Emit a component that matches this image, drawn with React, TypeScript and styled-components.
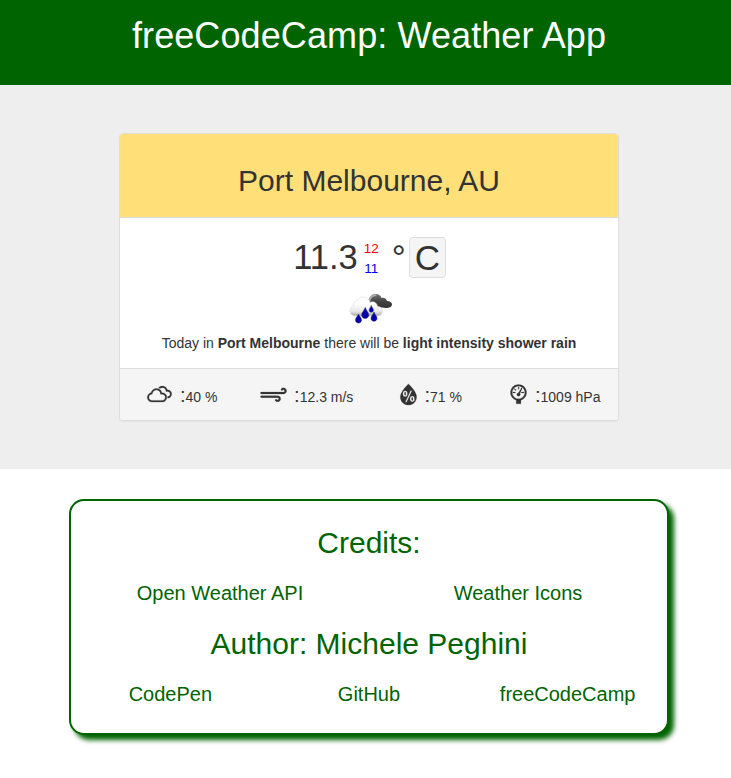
import React from "react";
import styled, { createGlobalStyle } from "styled-components";
import { WiCloudy, WiStrongWind, WiHumidity, WiBarometer } from "react-icons/wi";

const GlobalStyle = createGlobalStyle`
  *, *::before, *::after { box-sizing: border-box; }
  html { overflow: hidden; }
  body {
    margin: 0;
    background: #fff;
    color: #333;
    font: 14px/20px "Liberation Sans", Arial, Helvetica, sans-serif;
  }
`;

const Page = styled.div`
  width: 738px;
  min-height: 778px;
  text-align: center;
`;

const Header = styled.header`
  height: 85px;
  padding-top: 16px;
  background: #006400;
`;

const Title = styled.h1`
  margin: 0;
  font-size: 36px;
  font-weight: 400;
  letter-spacing: 0.1px;
  line-height: 40px;
  color: #fff;
`;

const Main = styled.main`
  display: flex;
  flex-direction: column;
  align-items: center;
  height: 384px;
  padding-top: 48px;
  background: #eee;
`;

const Card = styled.section`
  width: 500px;
  height: 288px;
  display: flex;
  flex-direction: column;
  overflow: hidden;
  background: #fff;
  border: 1px solid #ddd;
  border-radius: 4px;
  box-shadow: 0 1px 1px rgba(0, 0, 0, 0.05);
`;

const CardHeading = styled.div`
  height: 84px;
  padding-top: 30px;
  background: #fedf78;
  border-bottom: 1px solid #ddd;
`;

const City = styled.h2`
  margin: 0;
  font-size: 30px;
  font-weight: 400;
  line-height: 33px;
`;

const CardBody = styled.div`
  flex: 1;
  display: flex;
  flex-direction: column;
  align-items: center;
`;

const Temperature = styled.div`
  display: flex;
  align-items: center;
  margin-top: 19px;
  height: 41px;
  font-size: 35px;
  line-height: 41px;
`;

const Degrees = styled.span`
  margin-left: 1px;
  font-size: 34.5px;
`;

const Range = styled.div`
  display: flex;
  flex-direction: column;
  margin: 2px 13px 0 6px;
  font-size: 13.5px;
  line-height: 20px;
`;

const Bound = styled.span<{ $color: string }>`
  color: ${(p) => p.$color};
`;

const UnitButton = styled.button`
  width: 37px;
  height: 41px;
  margin-left: 3px;
  padding: 0;
  font: inherit;
  line-height: 40px;
  color: inherit;
  background: #f5f5f5;
  border: 1px solid #ddd;
  border-radius: 4px;
`;

const ConditionIcon = styled.svg`
  display: block;
  margin: 5px 0 0 3px;
`;

const Summary = styled.p`
  margin: 0;
  white-space: nowrap;
`;

const CardFooter = styled.div`
  display: grid;
  grid-template-columns: repeat(4, 1fr);
  height: 52px;
  background: #f5f5f5;
  border-top: 1px solid #ddd;
`;

const Metric = styled.div`
  display: flex;
  justify-content: center;
  align-items: flex-start;
  padding-top: 9px;
  white-space: nowrap;
`;

const IconSlot = styled.span<{ $width: number }>`
  display: flex;
  flex: none;
  justify-content: center;
  width: ${(p) => p.$width}px;
  margin: 0 7px 0 -1px;

  svg {
    flex: none;
    stroke: currentColor;
    stroke-width: 0.2;
  }
`;

const MetricText = styled.span`
  line-height: 34px;
  height: 34px;
`;

const Colon = styled.span`
  font-size: 20px;
`;

const Credits = styled.footer`
  width: 600px;
  height: 236px;
  margin: 30px auto 0;
  padding-top: 25px;
  color: #006400;
  background: #fff;
  border: 2px solid #006400;
  border-radius: 15px;
  box-shadow: 5px 5px 5px #006400;
`;

const CreditsTitle = styled.h2`
  margin: 0;
  font-size: 30px;
  font-weight: 400;
  line-height: 33px;
`;

const Links = styled.nav<{ $columns: number }>`
  display: grid;
  grid-template-columns: repeat(${(p) => p.$columns}, 1fr);
  padding: 18px 0 17px;
`;

const CreditLink = styled.a`
  font-size: 20px;
  line-height: 33px;
  color: inherit;
  text-decoration: none;
`;

function ShowerRain() {
  return (
    <ConditionIcon width="50" height="50" viewBox="0 0 50 50" aria-hidden="true">
      <defs>
        <linearGradient id="light" x1="0" y1="0" x2="0" y2="1">
          <stop offset="0.35" stopColor="#fff" />
          <stop offset="0.75" stopColor="#e8e8e8" />
          <stop offset="1" stopColor="#a9a9a9" />
        </linearGradient>
        <linearGradient id="dark" x1="0" y1="0" x2="0" y2="1">
          <stop offset="0" stopColor="#777" />
          <stop offset="0.5" stopColor="#444" />
          <stop offset="1" stopColor="#333" />
        </linearGradient>
      </defs>
      <path
        d="M22 19C23 14 26 11 29.500 11C33 11 35 13 35.500 15C38 14 40.500 15.500 41 18C44 18 46 19.500 46 21.500C46 24 43 25 40 25L32 24Z"
        fill="url(#dark)"
      />
      <path
        d="M22 19C23 14 26 11 29 11C31 11.500 31 12 30 13C27 13 25 15 24 19Z"
        fill="#aaa"
      />
      <path
        d="M10 33C6 33 4 31 4 28C4 25 5.500 23.500 7.500 23C7 20 8.500 18 11 18C12 15.500 14 14 17 14C21 14 23.500 17 23.800 19.500C27 17.800 31 19.500 31.500 23.500C34.500 23.500 36.500 25.500 36.500 28C36.500 31 34.500 33 31 33Z"
        fill="url(#light)"
        stroke="#ddd"
        strokeWidth="0.600"
      />
      <g fill="#0000ad" stroke="#1c1c58" strokeWidth="0.500">
        <path d="M12.500 31C13 33 15.500 34.500 15.500 37C15.500 38.800 14.200 40 12.500 40S9.500 38.800 9.500 37C9.500 34.500 12 33 12.500 31Z" />
        <path d="M19.200 24.500C20 27.500 22.800 29.500 22.800 32C22.800 34 21.200 35.400 19.200 35.400S15.600 34 15.600 32C15.600 29.500 18.500 27.500 19.200 24.500Z" />
        <path d="M25.300 22.500C25.700 24.300 27.400 25.500 27.400 27.200C27.400 28.400 26.500 29.200 25.300 29.200S23.200 28.400 23.200 27.200C23.200 25.500 24.900 24.300 25.300 22.500Z" />
        <path d="M28 29C28.500 31.300 31 33 31 35.200C31 37 29.700 38.200 28 38.200S25 37 25 35.200C25 33 27.500 31.300 28 29Z" />
      </g>
    </ConditionIcon>
  );
}

const metrics = [
  { name: "clouds", Icon: WiCloudy, iconWidth: 27, value: "40 %" },
  { name: "wind", Icon: WiStrongWind, iconWidth: 28, value: "12.3 m/s" },
  { name: "humidity", Icon: WiHumidity, iconWidth: 18, value: "71 %" },
  { name: "pressure", Icon: WiBarometer, iconWidth: 18, value: "1009 hPa" },
];

export default function App() {
  return (
    <Page>
      <GlobalStyle />
      <Header>
        <Title>freeCodeCamp: Weather App</Title>
      </Header>
      <Main>
        <Card>
          <CardHeading>
            <City>Port Melbourne, AU</City>
          </CardHeading>
          <CardBody>
            <Temperature>
              <Degrees>11.3</Degrees>
              <Range>
                <Bound $color="#f00">12</Bound>
                <Bound $color="#00f">11</Bound>
              </Range>
              <span>°</span>
              <UnitButton type="button">C</UnitButton>
            </Temperature>
            <ShowerRain />
            <Summary>
              Today in <b>Port Melbourne</b> there will be <b>light intensity shower rain</b>
            </Summary>
          </CardBody>
          <CardFooter>
            {metrics.map(({ name, Icon, iconWidth, value }) => (
              <Metric key={name}>
                <IconSlot $width={iconWidth}>
                  <Icon size={33} />
                </IconSlot>
                <MetricText>
                  <Colon>:</Colon>
                  {value}
                </MetricText>
              </Metric>
            ))}
          </CardFooter>
        </Card>
      </Main>
      <Credits>
        <CreditsTitle>Credits:</CreditsTitle>
        <Links $columns={2}>
          <CreditLink>Open Weather API</CreditLink>
          <CreditLink>Weather Icons</CreditLink>
        </Links>
        <CreditsTitle>Author: Michele Peghini</CreditsTitle>
        <Links $columns={3}>
          <CreditLink>CodePen</CreditLink>
          <CreditLink>GitHub</CreditLink>
          <CreditLink>freeCodeCamp</CreditLink>
        </Links>
      </Credits>
    </Page>
  );
}
